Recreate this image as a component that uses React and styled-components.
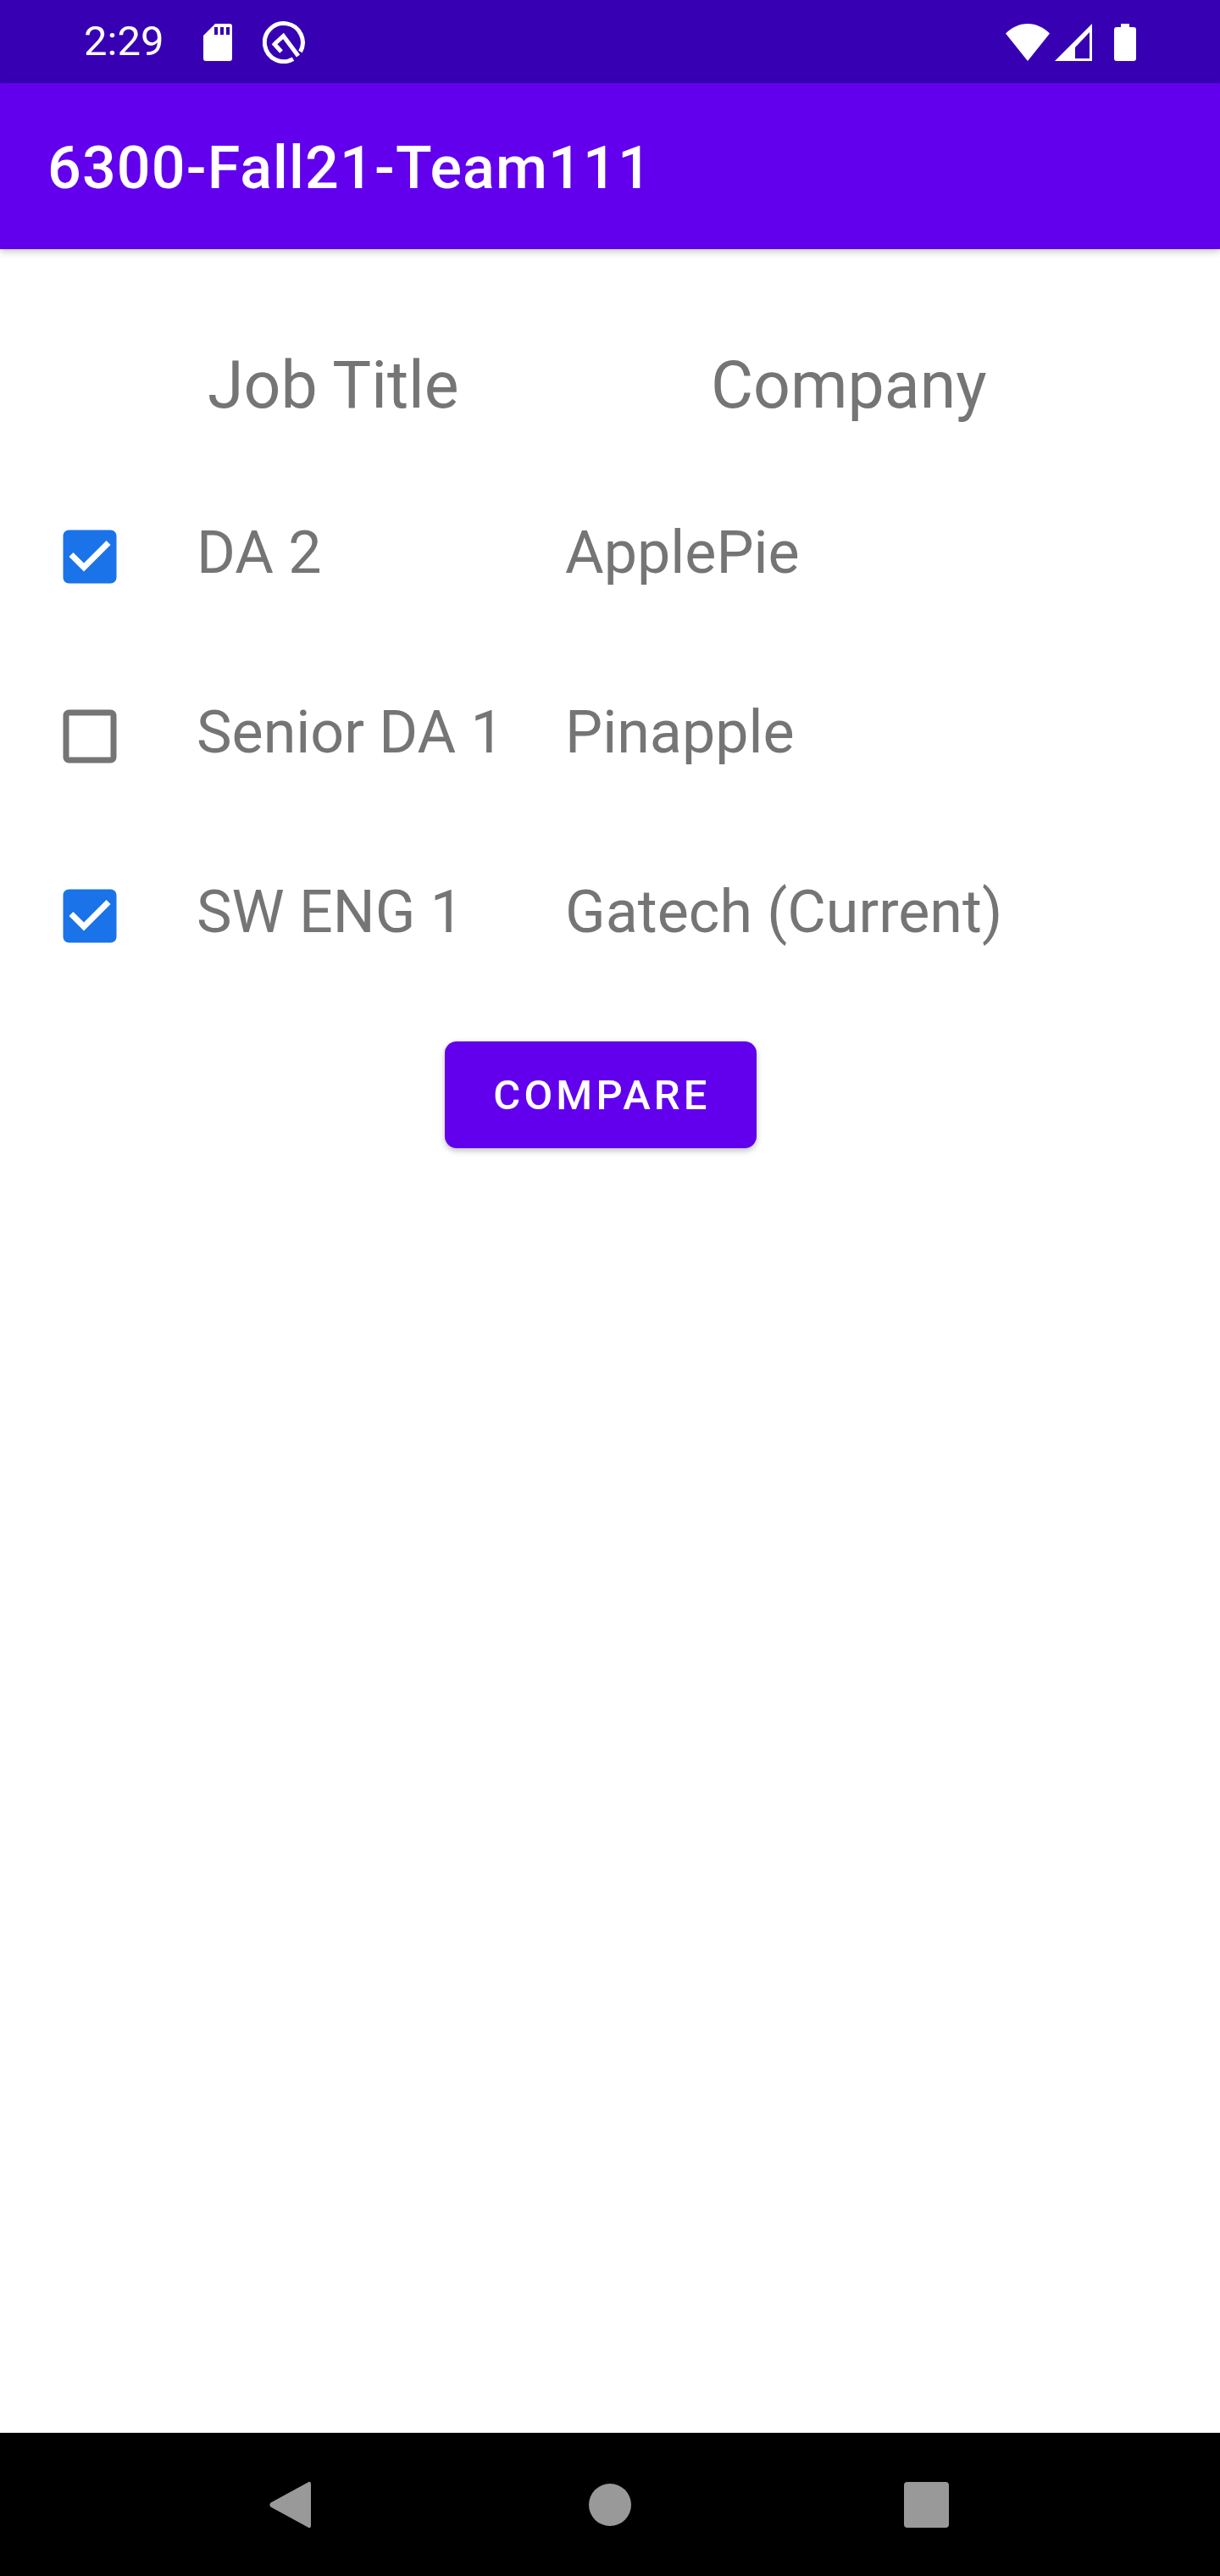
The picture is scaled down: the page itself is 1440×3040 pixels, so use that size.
import styled, { createGlobalStyle } from 'styled-components';

const GlobalStyle = createGlobalStyle`
  html, body {
    margin: 0;
    padding: 0;
    background: #fff;
    font-family: Roboto, "Liberation Sans", sans-serif;
  }
`;

const Screen = styled.div`
  width: 1440px;
  height: 3040px;
  display: flex;
  flex-direction: column;
  overflow: hidden;
  background: #fff;
`;

const StatusBar = styled.div`
  height: 98px;
  flex: none;
  display: flex;
  align-items: center;
  padding-left: 99px;
  padding-right: 98px;
  background: #3700b3;
  color: #fff;
`;

const Time = styled.span`
  font-size: 49px;
  line-height: 98px;
  margin-right: 46px;
`;

const StatusIcon = styled.svg`
  display: block;
  flex: none;
  margin-left: ${(p) => p.$gap || 0}px;
  margin-top: 2px;
`;

const Spacer = styled.div`
  flex: 1;
`;

const AppBar = styled.header`
  height: 196px;
  flex: none;
  display: flex;
  align-items: center;
  padding-left: 56px;
  padding-top: 4px;
  box-sizing: border-box;
  background: #6200ee;
  color: #fff;
  font-size: 70px;
  font-weight: 500;
  letter-spacing: 1.15px;
  box-shadow: 0 3px 8px rgba(0, 0, 0, 0.22);
  position: relative;
`;

const Content = styled.main`
  flex: 1;
  display: flex;
  flex-direction: column;
  padding-top: 116px;
`;

const HeaderRow = styled.div`
  display: flex;
  height: 176px;
  font-size: 77px;
  line-height: 90px;
  color: #757575;
  padding-left: 245px;
`;

const HeaderCell = styled.div`
  width: ${(p) => p.$width}px;
`;

const JobRow = styled.div`
  display: grid;
  grid-template-columns: 84px 519px 1fr;
  height: 212px;
  padding-left: 64px;
  font-size: 70px;
  line-height: 82px;
  color: #757575;
`;

const CheckBox = styled.svg`
  display: block;
  margin-top: 29px;
  fill: ${(p) => (p.$checked ? '#1a73e8' : '#757575')};
`;

const JobTitle = styled.div`
  padding-left: 84px;
  margin-top: 25px;
`;

const Company = styled.div`
  margin-top: 25px;
`;

const ButtonRow = styled.div`
  display: flex;
  padding-left: 525px;
  margin-top: 7px;
`;

const CompareButton = styled.button`
  width: 368px;
  height: 126px;
  border: none;
  border-radius: 14px;
  padding: 0 0 0 3px;
  background: #6200ee;
  color: #fff;
  font-family: inherit;
  font-size: 49px;
  font-weight: 500;
  letter-spacing: 0.085em;
  box-shadow: 0 3px 7px rgba(0, 0, 0, 0.25);
`;

const NavBar = styled.nav`
  height: 169px;
  flex: none;
  display: flex;
  align-items: center;
  background: #000;
  padding-left: 318px;
`;

const NavIcon = styled.svg`
  display: block;
  flex: none;
  margin-left: ${(p) => p.$gap || 0}px;
  fill: #999;
`;

const jobs = [
  { title: 'DA 2', company: 'ApplePie', checked: true },
  { title: 'Senior DA 1', company: 'Pinapple', checked: false },
  { title: 'SW ENG 1', company: 'Gatech (Current)', checked: true },
];

const checkedPath = 'M19 3H5c-1.11 0-2 .9-2 2v14c0 1.1.89 2 2 2h14c1.11 0 2-.9 2-2V5c0-1.1-.89-2-2-2zm-9 14l-5-5 1.41-1.41L10 14.17l7.59-7.59L19 8l-9 9z';
const blankPath = 'M19 5v14H5V5h14m0-2H5c-1.1 0-2 .9-2 2v14c0 1.1.9 2 2 2h14c1.1 0 2-.9 2-2V5c0-1.1-.9-2-2-2z';

export default function App() {
  return (
    <Screen>
      <GlobalStyle />
      <StatusBar>
        <Time>2:29</Time>
        <StatusIcon width="36" height="46" viewBox="0 0 36 46">
          <path fill="#fff" fillRule="evenodd" d="M15 1H32a3 3 0 0 1 3 3V42a3 3 0 0 1-3 3H4a3 3 0 0 1-3-3V15ZM14 5v9h4V5ZM21 5v9h4V5ZM28 5v9h4V5Z" />
        </StatusIcon>
        <StatusIcon $gap={35} width="50" height="50" viewBox="0 0 50 50">
          <path fill="none" stroke="#fff" strokeWidth="5" d="M36 44.600A22.500 22.500 0 1 1 44.500 36" />
          <path fill="none" stroke="#fff" strokeWidth="5" d="M14 27 24.500 17.500 42 41M12.500 25.500 22 36" />
        </StatusIcon>
        <Spacer />
        <StatusIcon width="54" height="46" viewBox="0 0 54 46">
          <path fill="#fff" d="M27 45 1 12.500C8 5.500 17 1 27 1s19 4.500 26 11.500Z" />
        </StatusIcon>
        <StatusIcon $gap={4} width="46" height="46" viewBox="0 0 46 46">
          <path fill="#fff" fillRule="evenodd" d="M45 1V45H1ZM42 11 25 29V42H42Z" />
        </StatusIcon>
        <StatusIcon $gap={24} width="28" height="46" viewBox="0 0 28 46">
          <path fill="#fff" d="M9 1H19V5H24a3 3 0 0 1 3 3V42a3 3 0 0 1-3 3H4a3 3 0 0 1-3-3V8a3 3 0 0 1 3-3H9Z" />
        </StatusIcon>
      </StatusBar>
      <AppBar>6300-Fall21-Team111</AppBar>
      <Content>
        <HeaderRow>
          <HeaderCell $width={594}>Job Title</HeaderCell>
          <HeaderCell $width={400}>Company</HeaderCell>
        </HeaderRow>
        {jobs.map((job) => (
          <JobRow key={job.title}>
            <CheckBox $checked={job.checked} width="84" height="84" viewBox="0 0 24 24">
              <path d={job.checked ? checkedPath : blankPath} />
            </CheckBox>
            <JobTitle>{job.title}</JobTitle>
            <Company>{job.company}</Company>
          </JobRow>
        ))}
        <ButtonRow>
          <CompareButton>COMPARE</CompareButton>
        </ButtonRow>
      </Content>
      <NavBar>
        <NavIcon width="50" height="56" viewBox="0 0 50 56">
          <path d="M49 3.500V52.500C49 55 47 56 45.500 54.500L1.500 30.500C0 29 0 27 1.500 25.500L45.500 1.500C47 0 49 1 49 3.500Z" />
        </NavIcon>
        <NavIcon $gap={327} width="50" height="50" viewBox="0 0 50 50">
          <circle cx="25" cy="25" r="25" />
        </NavIcon>
        <NavIcon $gap={322} width="53" height="54" viewBox="0 0 53 54">
          <rect width="53" height="54" rx="4" />
        </NavIcon>
      </NavBar>
    </Screen>
  );
}
